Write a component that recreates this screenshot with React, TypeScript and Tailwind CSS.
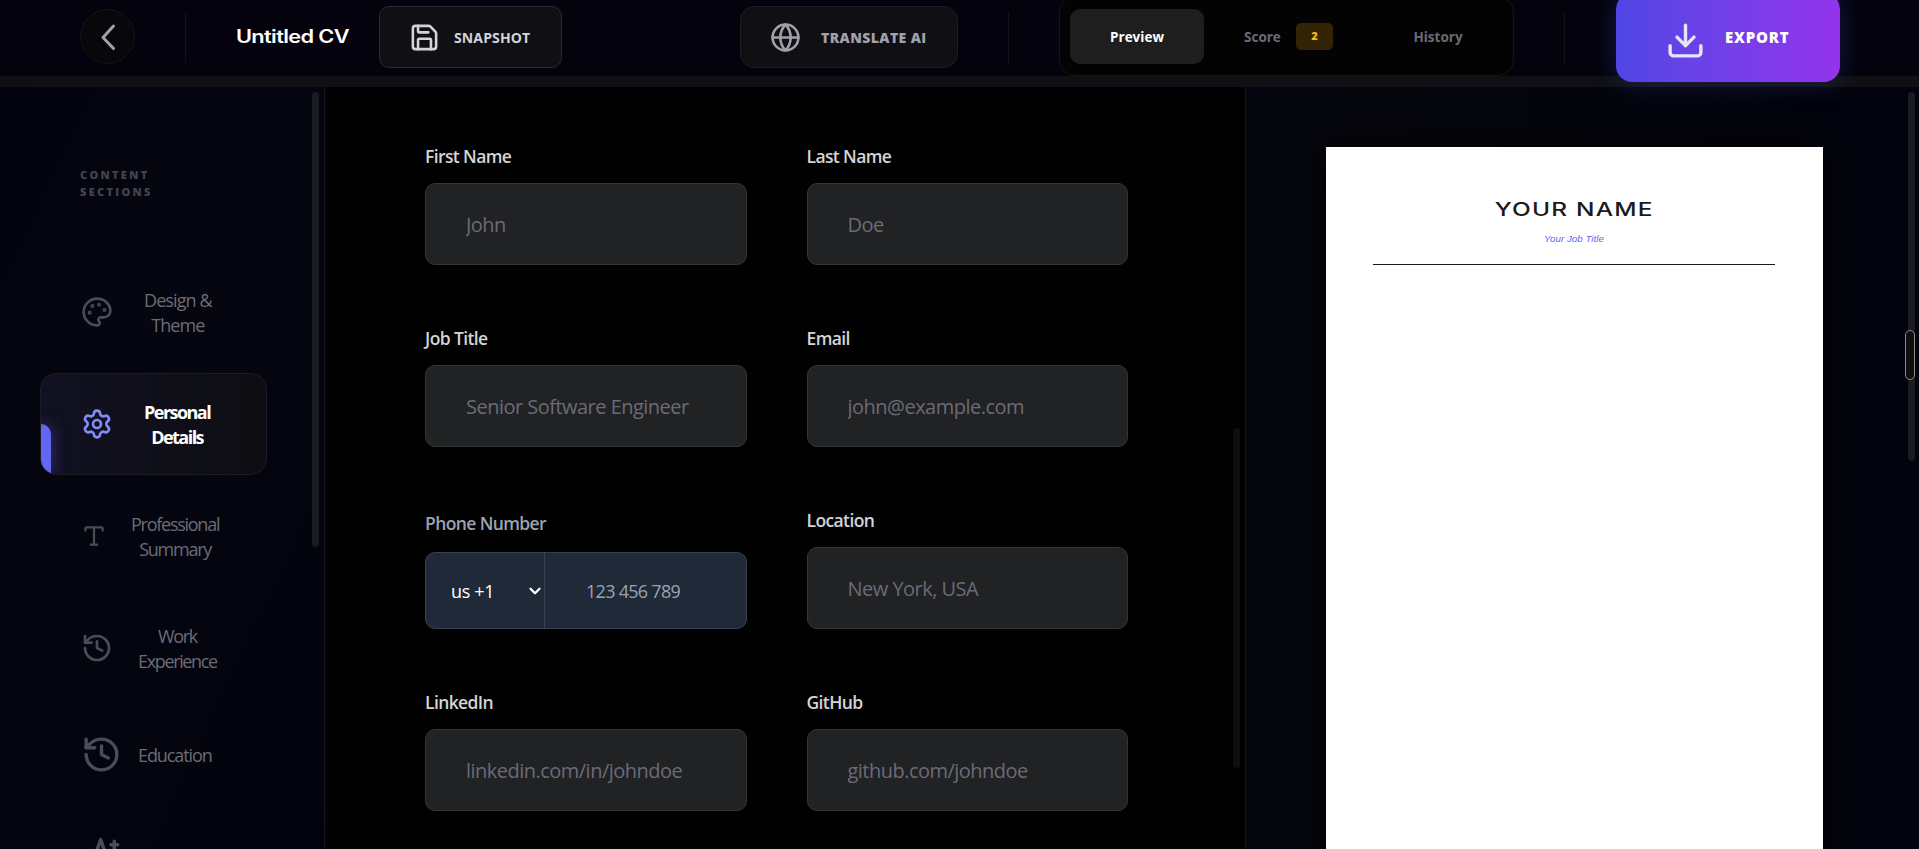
import clsx from "clsx";
import {
  ChevronDown,
  Download,
  Globe,
  History,
  Palette,
  Save,
  Settings,
  Type,
} from "lucide-react";

type IconProps = { className?: string; strokeWidth?: number };

function SkillsIcon({ className, strokeWidth = 2 }: IconProps) {
  return (
    <svg
      viewBox="0 0 24 24"
      fill="none"
      stroke="currentColor"
      strokeWidth={strokeWidth}
      strokeLinecap="round"
      strokeLinejoin="round"
      className={className}
    >
      <path d="M8 15 11.5 5 15 15" />
      <path d="M9 12h5" />
      <path d="M17.5 8h4M19.5 6v4" />
    </svg>
  );
}

const sections = [
  {
    title: "Design & Theme",
    lines: ["Design &", "Theme"],
    icon: Palette,
    iconClass: "size-8",
    gap: "pl-[31px] tracking-[-0.05em]",
  },
  {
    title: "Personal Details",
    lines: ["Personal", "Details"],
    icon: Settings,
    iconClass: "size-8",
    gap: "pl-[31px]",
    active: true,
  },
  {
    title: "Professional Summary",
    lines: ["Professional", "Summary"],
    icon: Type,
    iconClass: "size-[26px]",
    gap: "pl-[24px] tracking-[-0.07em]",
  },
  {
    title: "Work Experience",
    lines: ["Work", "Experience"],
    icon: History,
    iconClass: "size-8",
    gap: "pl-[25px] tracking-[-0.075em]",
  },
];

const labelClass = "text-[17.5px] leading-6 font-semibold tracking-[-0.035em]";

function Divider({ className }: { className?: string }) {
  return <div className={clsx("h-[51px] w-px shrink-0 bg-[#121218]", className)} />;
}

function Header() {
  return (
    <header className="relative z-10 flex h-[87px] shrink-0 items-start border-b-[11px] border-[#0f0f14] bg-[#03020d] pl-20">
      <button className="mt-[9px] flex size-[55px] shrink-0 items-center justify-center rounded-full border border-[#151518] bg-[#08080b] text-[#a1a1aa]">
        <svg
          viewBox="0 0 16 28"
          fill="none"
          stroke="currentColor"
          strokeWidth="3"
          strokeLinecap="round"
          strokeLinejoin="round"
          className="h-7 w-4"
        >
          <path d="M13.5 3 3 14.5l10.5 11" />
        </svg>
      </button>
      <Divider className="mt-3 ml-[50px]" />
      <h1 className="mt-[22px] ml-[50px] w-[143px] text-[18px] leading-7 font-semibold whitespace-nowrap text-white">
        <span className="inline-block origin-left scale-x-[1.21] font-['Inter',sans-serif] tracking-[-0.03em]">
          Untitled CV
        </span>
      </h1>
      <button className="mt-1.5 flex h-[62px] w-[183px] shrink-0 items-center rounded-[10px] border border-[#29292e] bg-[#0f0f14] pl-[29px] text-[#d4d4d8]">
        <Save className="size-[31px]" />
        <span className="ml-[14px] text-[14px] font-bold tracking-[0.01em]">
          SNAPSHOT
        </span>
      </button>

      <button className="mt-1.5 ml-[178px] flex h-[62px] w-[218px] shrink-0 items-center rounded-[14px] border border-[#1c1c21] bg-[#0f0f14] pl-[29px] text-[#a1a1aa]">
        <Globe className="size-[31px]" />
        <span className="ml-5 text-[14px] font-extrabold tracking-[0.03em] whitespace-nowrap">
          TRANSLATE AI
        </span>
      </button>
      <Divider className="mt-3 ml-[50px]" />

      <div className="-mt-1 ml-[50px] flex h-20 w-[455px] shrink-0 items-start rounded-[16px] border border-[#151518] bg-[#030304] pt-3 pl-[9px] text-[13.5px] font-bold text-[#6b6b76]">
        <button className="ml-px flex h-[55px] w-[134px] shrink-0 items-center justify-center rounded-[10px] bg-[#1e1e1e] pt-0.5 text-white">
          Preview
        </button>
        <button className="flex h-[55px] w-[167px] shrink-0 items-center pl-10">
          <span className="w-[52px] pt-0.5 text-left">Score</span>
          <span className="flex h-[27px] w-[37px] items-center justify-center rounded-[5px] bg-[#332405] text-[11px] font-extrabold text-[#ffb900]">
            2
          </span>
        </button>
        <button className="flex h-[55px] w-[134px] shrink-0 items-center justify-center pt-0.5">
          History
        </button>
      </div>
      <Divider className="mt-3 ml-[50px]" />

      <button className="-mt-[7px] ml-[51px] flex h-[89px] w-[224px] shrink-0 items-center rounded-[16px] bg-gradient-to-r from-[#4f46e5] to-[#9333ea] pl-[49px] text-white shadow-[0_0_28px_rgba(99,102,241,0.25)]">
        <Download className="mt-1.5 size-[41px] text-[#e6e3fc]" strokeWidth={2} />
        <span className="ml-[19px] text-[15px] font-extrabold tracking-[0.055em]">
          EXPORT
        </span>
      </button>
    </header>
  );
}

function Sidebar() {
  return (
    <aside className="relative w-[325px] shrink-0 overflow-hidden border-r border-[#15151c] bg-[linear-gradient(115deg,#03030f_0%,#05060f_35%,#03030d_100%)] pt-[79px] pl-10">
      <h2 className="w-[120px] pl-10 text-[11px] leading-[17px] font-extrabold tracking-[0.21em] text-[#42434c]">
        CONTENT SECTIONS
      </h2>
      <nav className="mt-[61px] w-[227px] text-[18px] leading-[25px] tracking-[-0.06em] text-[#6b6c76]">
        {sections.map(({ title, lines, icon: Icon, iconClass, gap, active }) => (
          <a
            key={title}
            title={title}
            className={clsx(
              "relative mb-[10px] flex h-[102px] items-center overflow-hidden rounded-[16px] border pl-10",
              active
                ? "border-[#1c1c25] bg-gradient-to-r from-[#121122] to-[#0d0d12] font-bold tracking-[-0.085em] text-white"
                : "border-transparent",
            )}
          >
            {active ? (
              <span className="absolute bottom-0 left-0 h-[50px] w-[10px] rounded-tr-[10px] bg-[#6366f1] shadow-[0_0_15px_rgba(99,102,241,0.5)]" />
            ) : undefined}
            <Icon
              className={clsx(
                "shrink-0",
                iconClass,
                active ? "text-[#818cf8]" : "text-[#4b4c56]",
              )}
            />
            <span
              className={clsx("pt-0.5 text-center whitespace-nowrap", gap)}
            >
              {lines.map((line) => (
                <span key={line} className="block">
                  {line}
                </span>
              ))}
            </span>
          </a>
        ))}
        <a className="flex h-[90px] items-center pl-[41px]">
          <History className="size-[41px] text-[#4b4c56]" />
          <span className="ml-4 pt-0.5">Education</span>
        </a>
        <a className="flex h-[90px] items-start pt-[32px] pl-[41px] text-[#4b4c56]">
          <SkillsIcon className="size-[41px]" />
        </a>
      </nav>
      <div className="absolute top-[5px] left-[312px] h-[455px] w-[7px] rounded-full bg-[#1a1a21]" />
    </aside>
  );
}

function Field({ label, placeholder }: { label: string; placeholder: string }) {
  return (
    <div className="h-[182px]">
      <label className={clsx("block text-[#d4d4d8]", labelClass)}>{label}</label>
      <input
        placeholder={placeholder}
        className="mt-[15px] block h-[82px] w-full rounded-[10px] border border-[#343536] bg-[#202223] px-10 text-[20px] tracking-[-0.026em] placeholder:text-[#6b6b78]"
      />
    </div>
  );
}

function PhoneField() {
  return (
    <div className="h-[182px] pt-[3px]">
      <label className={clsx("block text-[#9ca3af]", labelClass)}>
        Phone Number
      </label>
      <div className="mt-[17px] flex h-[77px] overflow-hidden rounded-[10px] border border-[#374151] bg-[#1f2937] text-[18px] tracking-[-0.04em]">
        <div className="flex w-[120px] items-center border-r border-[#374151] pl-[25px] text-white">
          <span className="w-[75px] pt-0.5 tracking-[-0.02em]">us +1</span>
          <ChevronDown className="size-[18px]" strokeWidth={3} />
        </div>
        <input
          placeholder="123 456 789"
          className="min-w-0 grow px-[41px] pt-0.5 placeholder:text-[#9ca3af]"
        />
      </div>
    </div>
  );
}

function Editor() {
  return (
    <main className="relative w-[921px] shrink-0 overflow-hidden border-r border-[#15151c] bg-[#010101] pt-[57px] pl-[100px]">
      <div className="grid w-[703px] grid-cols-2 gap-x-[60px]">
        <Field label="First Name" placeholder="John" />
        <Field label="Last Name" placeholder="Doe" />
        <Field label="Job Title" placeholder="Senior Software Engineer" />
        <Field label="Email" placeholder="john@example.com" />
        <PhoneField />
        <Field label="Location" placeholder="New York, USA" />
        <Field label="LinkedIn" placeholder="linkedin.com/in/johndoe" />
        <Field label="GitHub" placeholder="github.com/johndoe" />
      </div>
      <div className="absolute top-[341px] left-[908px] h-[340px] w-[7px] rounded-full bg-[#0e0e0f]" />
    </main>
  );
}

function Preview() {
  return (
    <section className="relative grow overflow-hidden bg-[linear-gradient(90deg,#05050f,#06070d_20%,#03030d)] pt-[60px] pl-20">
      <article className="h-[760px] w-[497px] bg-white pr-12 pl-[47px] pt-12 text-center shadow-[0_0_40px_rgba(0,0,0,0.8)]">
        <h2 className="text-[18.5px] leading-7 font-medium whitespace-nowrap text-[#1a1a1a]">
          <span className="inline-block scale-x-[1.32] font-['Inter',sans-serif] tracking-[0.05em]">
            YOUR NAME
          </span>
        </h2>
        <p className="mt-[10px] text-[9.8px] leading-3 text-[#6366f1] italic font-['Liberation_Sans',sans-serif]">
          Your Job Title
        </p>
        <hr className="mt-[19px] border-t border-[#1a1a1a]" />
      </article>
      <div className="absolute top-[5px] right-1 h-[369px] w-[7px] rounded-full bg-[#1a1a21]" />
      <div className="absolute top-[243px] right-1 h-[50px] w-[10px] rounded-full border border-[#8a8a8a] bg-[#0f0f10]" />
    </section>
  );
}

export default function App() {
  return (
    <div className="flex h-[849px] w-[1919px] flex-col overflow-hidden bg-[#03030d] font-['Open_Sans','Noto_Sans',sans-serif]">
      <Header />
      <div className="flex min-h-0 grow">
        <Sidebar />
        <Editor />
        <Preview />
      </div>
    </div>
  );
}
